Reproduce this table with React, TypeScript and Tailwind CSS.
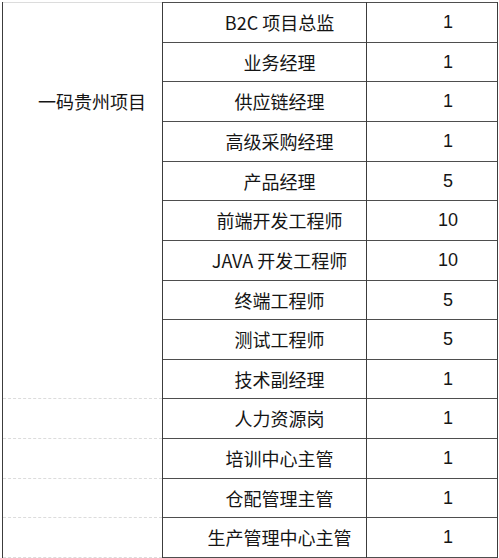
import React from 'react';

type Row = { title: string; count: string; h: string };

// row heights include the 1px top border so the lines land on the reference grid
const rows: Row[] = [
    { title: 'B2C 项目总监', count: '1', h: 'h-[40px]' },
    { title: '业务经理', count: '1', h: 'h-[39px]' },
    { title: '供应链经理', count: '1', h: 'h-[40px]' },
    { title: '高级采购经理', count: '1', h: 'h-[40px]' },
    { title: '产品经理', count: '5', h: 'h-[39px]' },
    { title: '前端开发工程师', count: '10', h: 'h-[40px]' },
    { title: 'JAVA 开发工程师', count: '10', h: 'h-[40px]' },
    { title: '终端工程师', count: '5', h: 'h-[39px]' },
    { title: '测试工程师', count: '5', h: 'h-[40px]' },
    { title: '技术副经理', count: '1', h: 'h-[39px]' },
    { title: '人力资源岗', count: '1', h: 'h-[40px]' },
    { title: '培训中心主管', count: '1', h: 'h-[40px]' },
    { title: '仓配管理主管', count: '1', h: 'h-[39px]' },
    { title: '生产管理中心主管', count: '1', h: 'h-[40px]' },
];

const cjk = { fontFamily: '"Noto Sans CJK SC", "Noto Sans", sans-serif' };
const num = { fontFamily: '"Liberation Sans", "Noto Sans CJK SC", sans-serif' };

const App: React.FC = () => {
    return (
        <div className="w-[499px] h-[558px] bg-white pt-[2px] pl-[2px] text-[#151515] overflow-hidden">
            <div className="flex">
                {/* project column: one merged block, then the lighter single cells */}
                <div className="w-[160px] flex flex-col border-l border-[#3c3c3c]">
                    <div className="h-[198px] border-t border-[#dcdcdc] flex items-center justify-center pl-[19px] text-[18px]" style={cjk}>
                        一码贵州项目
                    </div>
                    <div className="h-[198px]" />
                    {rows.slice(10).map((r, i) => (
                        <div key={i} className={`${r.h} border-t border-dashed border-[#dcdcdc]`} />
                    ))}
                    <div className="border-t border-dashed border-[#dcdcdc]" />
                </div>

                <div className="w-[204px] flex flex-col border-l border-[#3c3c3c]">
                    {rows.map((r, i) => (
                        <div key={i} className={`${r.h} border-t border-[#4e4e4e] flex items-center justify-center pl-[30px] text-[18px] whitespace-nowrap`} style={cjk}>
                            {r.title}
                        </div>
                    ))}
                    <div className="border-t border-[#4e4e4e]" />
                </div>

                <div className="w-[132px] flex flex-col border-l border-r border-[#3c3c3c]">
                    {rows.map((r, i) => (
                        <div key={i} className={`${r.h} border-t border-[#4e4e4e] flex items-center justify-center pl-[32px] text-[18px]`} style={num}>
                            {r.count}
                        </div>
                    ))}
                    <div className="border-t border-[#4e4e4e]" />
                </div>
            </div>
        </div>
    );
};

export default App;
